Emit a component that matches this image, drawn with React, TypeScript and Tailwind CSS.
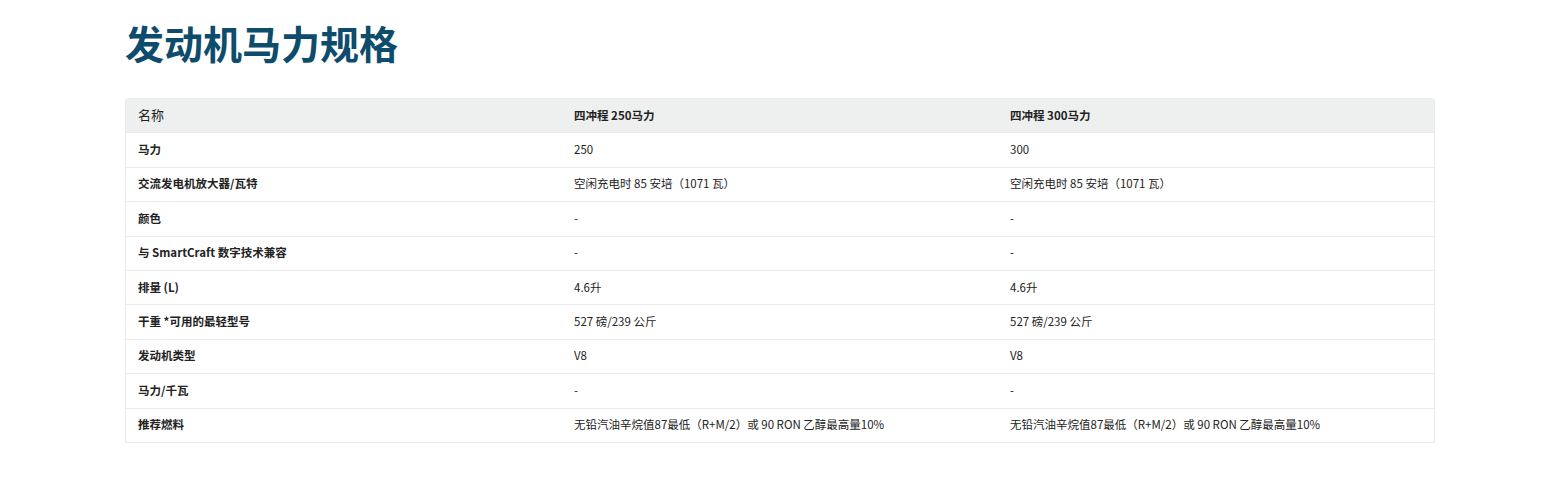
const headers = ['名称', '四冲程 250马力', '四冲程 300马力'];

const rows: [string, string, string][] = [
  ['马力', '250', '300'],
  ['交流发电机放大器/瓦特', '空闲充电时 85 安培（1071 瓦）', '空闲充电时 85 安培（1071 瓦）'],
  ['颜色', '-', '-'],
  ['与 SmartCraft 数字技术兼容', '-', '-'],
  ['排量 (L)', '4.6升', '4.6升'],
  ['干重 *可用的最轻型号', '527 磅/239 公斤', '527 磅/239 公斤'],
  ['发动机类型', 'V8', 'V8'],
  ['马力/千瓦', '-', '-'],
  ['推荐燃料', '无铅汽油辛烷值87最低（R+M/2）或 90 RON 乙醇最高量10%', '无铅汽油辛烷值87最低（R+M/2）或 90 RON 乙醇最高量10%'],
];

export default function App() {
  return (
    <div className="min-h-[485px] bg-white font-['Noto_Sans_CJK_SC',sans-serif] text-[#222]">
      <div className="mx-auto w-[1310px] pt-[14px]">
        <h1 className="text-[39px] font-bold leading-[56px] text-[#0e4c6c]">发动机马力规格</h1>

        <div className="mt-[28px] overflow-hidden rounded-t-[3px] border border-[#ebebeb]">
          <div className="grid h-[33.4px] grid-cols-3 items-center bg-[#eef0ef] pb-[1px]">
            {headers.map((h, i) => (
              <div key={i} className={i === 0 ? 'pl-[12px] text-[13px]' : 'pl-[12px] text-[11.5px] font-bold'}>
                {h}
              </div>
            ))}
          </div>
          {rows.map((r, idx) => (
            <div key={idx} className="grid h-[34.4px] grid-cols-3 items-center border-t border-[#ebebeb] pb-[1px] text-[11.5px]">
              <div className="pl-[12px] font-bold">{r[0]}</div>
              <div className="pl-[12px]">{r[1]}</div>
              <div className="pl-[12px]">{r[2]}</div>
            </div>
          ))}
        </div>
      </div>
    </div>
  );
}
